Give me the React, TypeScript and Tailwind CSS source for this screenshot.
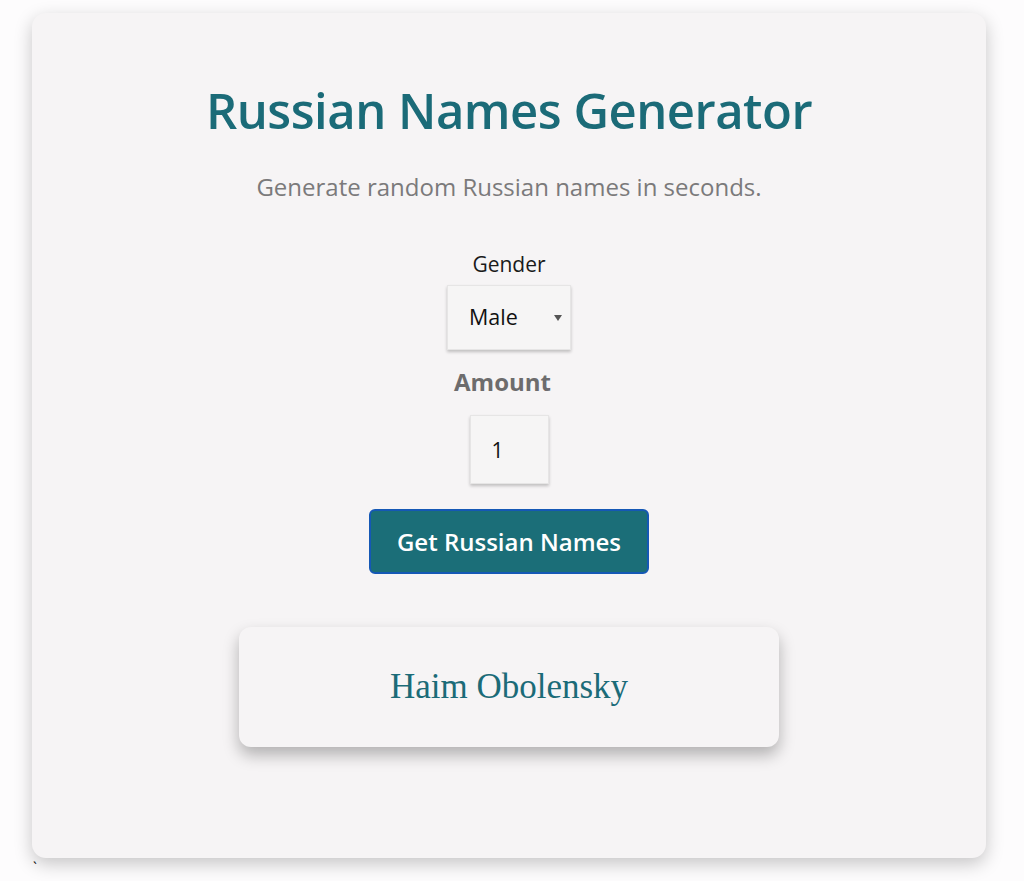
import { useState } from "react";

export default function App() {
  const [gender, setGender] = useState("Male");
  const [amount, setAmount] = useState("1");

  return (
    <div className="min-h-[881px] w-full bg-[#fdfcfd] pt-[13px] font-['Open_Sans',sans-serif]">
      <div className="ml-[32px] flex h-[845px] w-[954px] flex-col items-center rounded-[14px] bg-[#f6f4f5] pt-[69px] shadow-[0_6px_18px_rgba(0,0,0,0.22)]">
        <h1 className="text-[49px] font-semibold leading-[56px] tracking-[-0.5px] text-[#1b6b78]">
          Russian Names Generator
        </h1>
        <p className="mt-[34px] text-[24px] leading-[30px] text-[#7b7a7b]">
          Generate random Russian names in seconds.
        </p>

        <label className="mt-[48px] text-[21px] leading-[28px] text-[#1a1a1a]">Gender</label>
        <div className="relative mt-[7px] h-[65px] w-[124px] border border-[#e6e5e5] bg-[#f6f5f5] shadow-[0_2px_3px_rgba(0,0,0,0.22)]">
          <select
            value={gender}
            onChange={(e) => setGender(e.target.value)}
            className="h-full w-full appearance-none bg-transparent pl-[21px] text-[21.5px] text-[#111] outline-none"
          >
            <option>Male</option>
            <option>Female</option>
          </select>
          <span className="pointer-events-none absolute right-[8px] top-[29px] h-0 w-0 border-x-[4px] border-t-[6px] border-x-transparent border-t-[#555]" />
        </div>

        <label className="mr-[13px] mt-[18px] text-[24px] font-bold leading-[28px] text-[#6d6c6d]">Amount</label>
        <input
          value={amount}
          onChange={(e) => setAmount(e.target.value)}
          className="mt-[19px] h-[69px] w-[79px] border border-[#e6e5e5] bg-[#f6f5f5] pl-[21px] text-[21px] text-[#111] shadow-[0_2px_3px_rgba(0,0,0,0.22)] outline-none"
        />

        <button className="mt-[25px] h-[65px] w-[280px] rounded-[6px] border-2 border-[#1558b5] bg-[#1b6e78] text-[24px] font-semibold text-white">
          Get Russian Names
        </button>

        <div className="mt-[53px] flex h-[120px] w-[540px] items-center justify-center rounded-[12px] bg-[#f6f4f5] shadow-[0_8px_16px_rgba(0,0,0,0.28)]">
          <span className="font-['Liberation_Serif',serif] text-[35px] leading-[40px] text-[#1b6b78]">Haim Obolensky</span>
        </div>
      </div>
      <div className="ml-[33px] mt-[2px] text-[14px] leading-[16px] text-black">`</div>
    </div>
  );
}
